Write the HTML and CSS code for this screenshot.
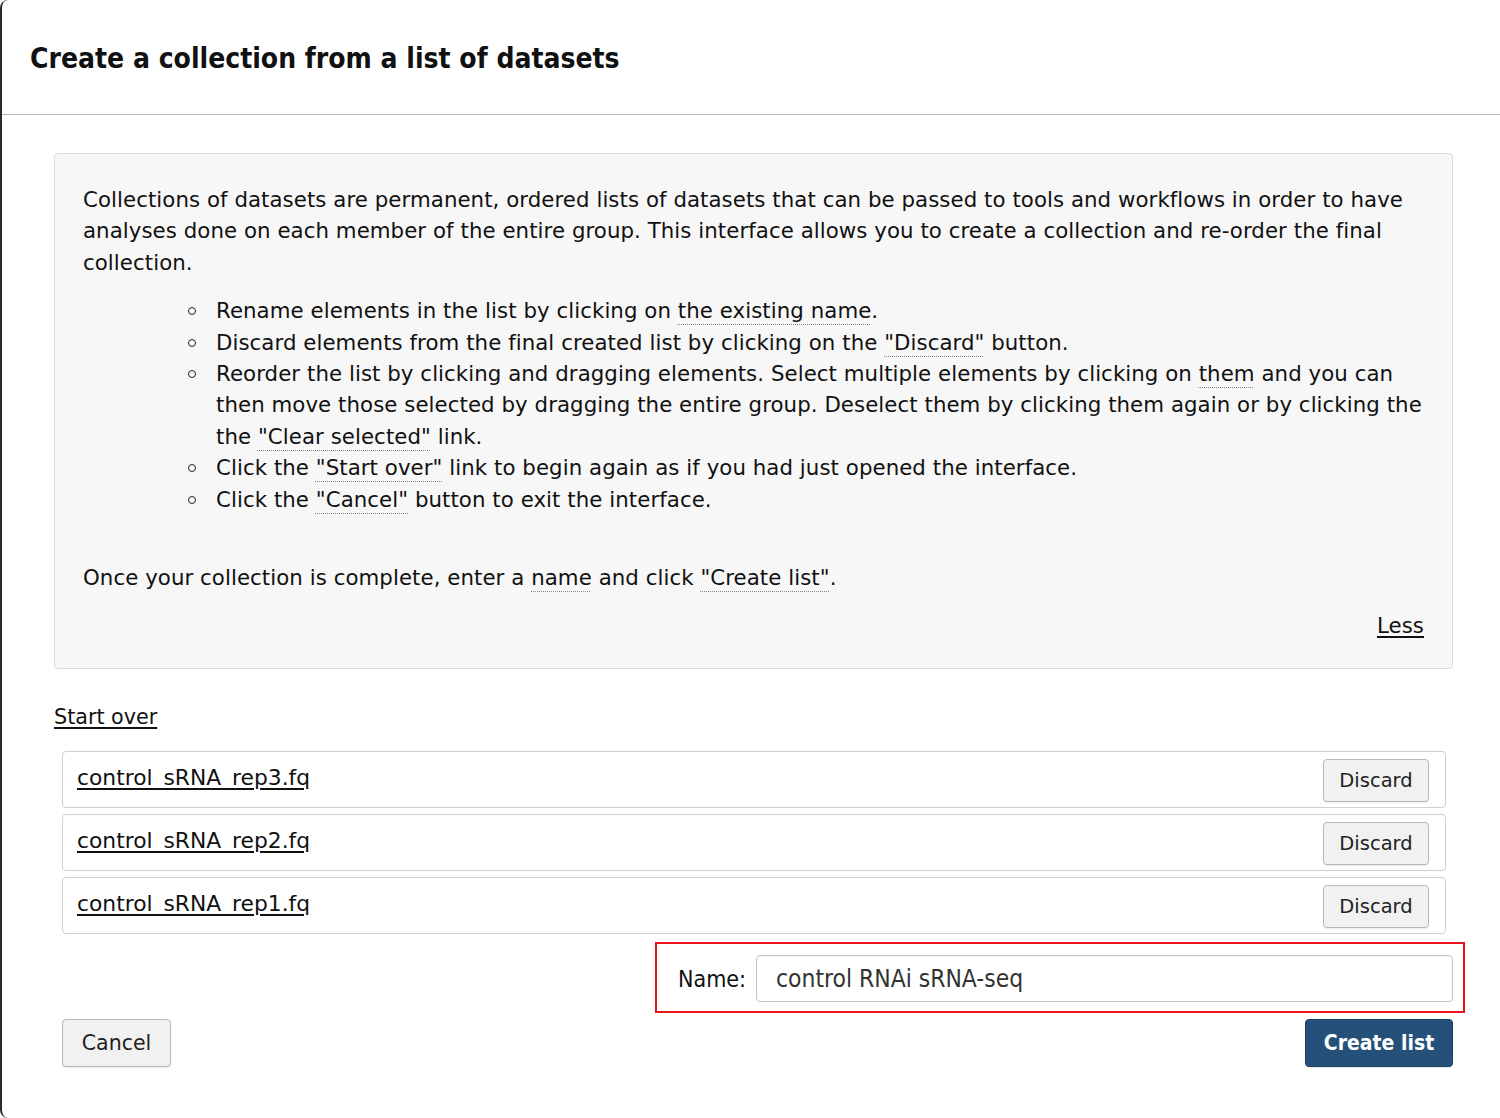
FILE: index.html
```html
<!DOCTYPE html>
<html>
<head>
<meta charset="utf-8">
<link rel="stylesheet" href="styles.css">
</head>
<body>
<div class="modal">
  <div class="modal-header">
    <h1 class="title">Create a collection from a list of datasets</h1>
  </div>
  <div class="modal-body">
    <div class="help">
      <p class="intro">Collections of datasets are permanent, ordered lists of datasets that can be passed to tools and workflows in order to have analyses done on each member of the entire group. This interface allows you to create a collection and re-order the final collection.</p>
      <ul class="tips">
        <li>Rename elements in the list by clicking on <span class="hint">the existing name</span>.</li>
        <li>Discard elements from the final created list by clicking on the <span class="hint">"Discard"</span> button.</li>
        <li>Reorder the list by clicking and dragging elements. Select multiple elements by clicking on <span class="hint">them</span> and you can then move those selected by dragging the entire group. Deselect them by clicking them again or by clicking the the <span class="hint">"Clear selected"</span> link.</li>
        <li>Click the <span class="hint">"Start over"</span> link to begin again as if you had just opened the interface.</li>
        <li>Click the <span class="hint">"Cancel"</span> button to exit the interface.</li>
      </ul>
      <p class="outro">Once your collection is complete, enter a <span class="hint">name</span> and click <span class="hint">"Create list"</span>.</p>
      <div class="less-row"><a class="link" href="#">Less</a></div>
    </div>
    <div class="start-row"><a class="link" href="#">Start over</a></div>
    <div class="elements">
      <div class="element"><a class="link name" href="#">control_sRNA_rep3.fq</a><button class="btn">Discard</button></div>
      <div class="element"><a class="link name" href="#">control_sRNA_rep2.fq</a><button class="btn">Discard</button></div>
      <div class="element"><a class="link name" href="#">control_sRNA_rep1.fq</a><button class="btn">Discard</button></div>
    </div>
    <div class="name-row">
      <div class="name-box">
        <label class="name-label">Name:</label>
        <div class="name-input">control RNAi sRNA-seq</div>
      </div>
    </div>
    <div class="footer">
      <button class="btn btn-cancel">Cancel</button>
      <button class="btn btn-primary">Create list</button>
    </div>
  </div>
</div>
</body>
</html>
```

FILE: styles.css
```css
html, body {
  margin: 0;
  padding: 0;
  background: #ffffff;
}
body {
  font-family: "DejaVu Sans", "Lucida Grande", Verdana, sans-serif;
  color: #111;
}
.modal {
  height: 1118px;
  box-sizing: border-box;
  border-left: 2px solid #2a2a2a;
  border-radius: 8px 0 0 8px;
  background: #fff;
}
.modal-header {
  height: 115px;
  box-sizing: border-box;
  border-bottom: 1px solid #b9b9b9;
  padding-left: 28px;
  display: flex;
  align-items: center;
}
.title {
  margin: 0;
  font-family: "DejaVu Sans Condensed", "DejaVu Sans", sans-serif;
  font-weight: bold;
  font-size: 28px;
  color: #111;
  position: relative;
  top: 1px;
}
.modal-body {
  padding: 38px 47px 0 52px;
}
.help {
  background: #f7f7f7;
  border: 1px solid #dcdcdc;
  border-radius: 4px;
  padding: 30px 28px 26px 28px;
  font-size: 21.3px;
  line-height: 31.4px;
  letter-spacing: 0.06px;
}
.help p {
  margin: 0;
}
.tips {
  margin: 17px -8px 0 0;
  padding-left: 133px;
  list-style: none;
}
.tips li {
  position: relative;
}
.tips li::before {
  content: "";
  position: absolute;
  left: -28px;
  top: 12px;
  width: 6px;
  height: 6px;
  border: 1.6px solid #222;
  border-radius: 50%;
}
.outro {
  margin-top: 47px !important;
}
.less-row {
  margin-top: 17px;
  display: flex;
  justify-content: flex-end;
}
.hint {
  text-decoration: underline dotted #888;
  text-decoration-thickness: 1px;
  text-underline-offset: 6px;
}
.link {
  color: #111;
  text-decoration: underline;
  text-underline-offset: 3px;
}
.start-row {
  margin-top: 33px;
  font-size: 20.7px;
  line-height: 31.4px;
}
.elements {
  margin: 18px 7px 0 8px;
  display: flex;
  flex-direction: column;
  gap: 6px;
}
.element {
  height: 57px;
  box-sizing: border-box;
  border: 1px solid #cfcfcf;
  border-radius: 4px;
  display: flex;
  align-items: center;
  justify-content: space-between;
  padding: 0 16px 0 14px;
  font-size: 21.8px;
}
.element .name {
  position: relative;
  top: -2px;
}
.btn {
  font-family: "DejaVu Sans", sans-serif;
  font-size: 19.5px;
  color: #222;
  background: #f1f1f1;
  border: 1px solid #b8b8b8;
  border-radius: 4px;
  height: 43px;
  padding: 0 16px;
  box-shadow: 0 1px 1px rgba(0,0,0,0.08);
}
.element .btn {
  width: 106px;
  padding: 0;
  position: relative;
  top: 1px;
}
.name-row {
  display: flex;
  justify-content: flex-end;
  margin-top: 8px;
  margin-right: -12px;
}
.name-box {
  border: 2px solid #e8141b;
  display: flex;
  align-items: center;
  padding: 11px 10px 9px 21px;
  width: 810px;
  box-sizing: border-box;
}
.name-label {
  font-family: "DejaVu Sans Condensed", "DejaVu Sans", sans-serif;
  font-size: 23px;
  margin-right: 10px;
}
.name-input {
  flex: 1;
  height: 47px;
  box-sizing: border-box;
  border: 1px solid #c4c4c4;
  border-radius: 4px;
  padding: 0 19px;
  display: flex;
  align-items: center;
  font-family: "DejaVu Sans Condensed", "DejaVu Sans", sans-serif;
  font-size: 24.4px;
  color: #333;
  box-shadow: inset 0 1px 1px rgba(0,0,0,0.06);
}
.footer {
  display: flex;
  justify-content: space-between;
  margin-top: 6px;
  padding-left: 8px;
}
.btn-cancel {
  width: 109px;
  height: 48px;
  padding: 0;
  font-size: 20.5px;
}
.btn-primary {
  width: 148px;
  height: 48px;
  padding: 0;
  background: #25507a;
  border-color: #1c3f62;
  color: #fff;
  font-family: "DejaVu Sans Condensed", "DejaVu Sans", sans-serif;
  font-weight: bold;
  font-size: 21px;
}
```
